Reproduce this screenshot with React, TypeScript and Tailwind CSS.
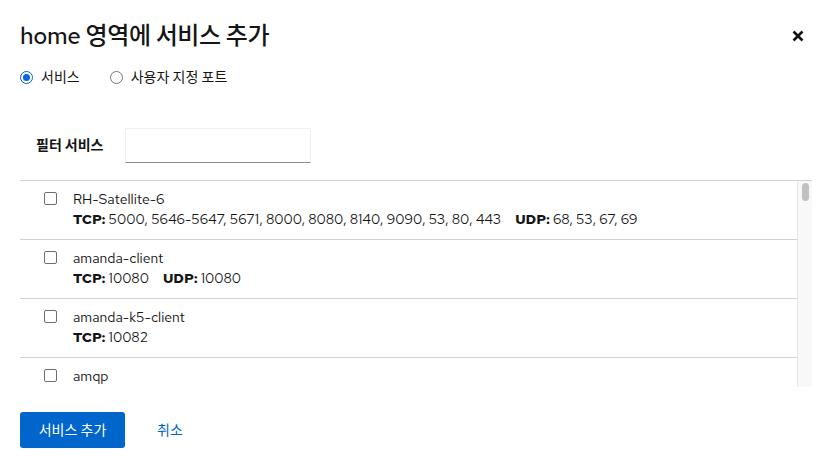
import React from 'react';

const font = { fontFamily: '"Red Hat Text", "Open Sans", "Noto Sans CJK KR", sans-serif' };

type Service = { name: string; tcp?: string; udp?: string };

const services: Service[] = [
  { name: 'RH-Satellite-6', tcp: '5000, 5646-5647, 5671, 8000, 8080, 8140, 9090, 53, 80, 443', udp: '68, 53, 67, 69' },
  { name: 'amanda-client', tcp: '10080', udp: '10080' },
  { name: 'amanda-k5-client', tcp: '10082' },
  { name: 'amqp' },
];

function ServiceRow({ svc }: { svc: Service }) {
  return (
    <div className="flex items-start border-b border-[#d2d2d2] pl-6 pt-[11px] h-[59px] shrink-0">
      <span className="w-[13px] h-[13px] border border-[#6a6e73] rounded-[2px] bg-white shrink-0" />
      <div className="ml-4 -mt-[3px] text-[14px] leading-[20px] text-[#151515]">
        <div>{svc.name}</div>
        {(svc.tcp || svc.udp) && (
          <div className="flex gap-[14px]">
            {svc.tcp && (
              <span>
                <b className="font-bold">TCP:</b> {svc.tcp}
              </span>
            )}
            {svc.udp && (
              <span>
                <b className="font-bold">UDP:</b> {svc.udp}
              </span>
            )}
          </div>
        )}
      </div>
    </div>
  );
}

export default function App() {
  return (
    <div className="w-[830px] h-[460px] bg-white text-[#151515] overflow-hidden" style={font}>
      <div className="flex items-start justify-between pl-5 pr-[26px] pt-[20px]">
        <h1 className="text-[24px] leading-[32px] font-medium tracking-[-0.4px]">home 영역에 서비스 추가</h1>
        <button className="mt-[10px] text-[#151515]">
          <svg width="12" height="12" viewBox="0 0 12 12">
            <path d="M1.5 1.5L10.5 10.5M10.5 1.5L1.5 10.5" stroke="#151515" strokeWidth="2.6" strokeLinecap="butt" />
          </svg>
        </button>
      </div>

      <div className="flex items-center pl-5 mt-[15px] text-[14px] leading-[20px]">
        <label className="flex items-center">
          <span className="w-[13px] h-[13px] rounded-full border border-[#0060df] flex items-center justify-center">
            <span className="w-[7px] h-[7px] rounded-full bg-[#0a64e8]" />
          </span>
          <span className="ml-2">서비스</span>
        </label>
        <label className="flex items-center ml-[30px]">
          <span className="w-[13px] h-[13px] rounded-full border border-[#767676]" />
          <span className="ml-2">사용자 지정 포트</span>
        </label>
      </div>

      <div className="flex items-center pl-9 mt-[41px]">
        <span className="text-[14px] font-bold">필터 서비스</span>
        <input
          className="ml-[22px] w-[186px] h-[35px] border border-[#f0f0f0] border-b-[#8a8d90] outline-none"
          type="text"
        />
      </div>

      <div className="ml-5 mr-[18px] mt-[17px] border-t border-[#d2d2d2] flex h-[207px]">
        <div className="flex-1 flex flex-col overflow-hidden">
          {services.map((s) => (
            <ServiceRow key={s.name} svc={s} />
          ))}
        </div>
        <div className="w-[15px] bg-[#f8f8f8] border-l border-[#e6e6e6] pt-[2px] flex justify-center">
          <div className="w-[7px] h-[18px] rounded-full bg-[#c1c1c1]" />
        </div>
      </div>

      <div className="flex items-center pl-5 mt-[25px]">
        <button className="h-[36px] w-[105px] rounded-[3px] bg-[#0066cc] text-white text-[14px]">서비스 추가</button>
        <button className="ml-[32px] text-[#0066cc] text-[14px]">취소</button>
      </div>
    </div>
  );
}
